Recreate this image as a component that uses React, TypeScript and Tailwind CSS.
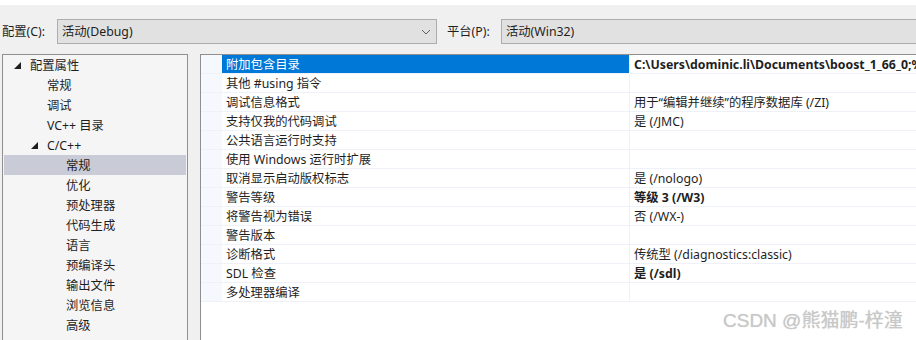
import { FC } from 'react';

const treeItems: { label: string; level: number; expanded?: boolean; selected?: boolean }[] = [
  { label: '配置属性', level: 0, expanded: true },
  { label: '常规', level: 1 },
  { label: '调试', level: 1 },
  { label: 'VC++ 目录', level: 1 },
  { label: 'C/C++', level: 1, expanded: true },
  { label: '常规', level: 2, selected: true },
  { label: '优化', level: 2 },
  { label: '预处理器', level: 2 },
  { label: '代码生成', level: 2 },
  { label: '语言', level: 2 },
  { label: '预编译头', level: 2 },
  { label: '输出文件', level: 2 },
  { label: '浏览信息', level: 2 },
  { label: '高级', level: 2 },
];

const props: { name: string; value: string; bold?: boolean }[] = [
  { name: '附加包含目录', value: 'C:\\Users\\dominic.li\\Documents\\boost_1_66_0;%(AdditionalIncludeDirectories)', bold: true },
  { name: '其他 #using 指令', value: '' },
  { name: '调试信息格式', value: '用于“编辑并继续”的程序数据库 (/ZI)' },
  { name: '支持仅我的代码调试', value: '是 (/JMC)' },
  { name: '公共语言运行时支持', value: '' },
  { name: '使用 Windows 运行时扩展', value: '' },
  { name: '取消显示启动版权标志', value: '是 (/nologo)' },
  { name: '警告等级', value: '等级 3 (/W3)', bold: true },
  { name: '将警告视为错误', value: '否 (/WX-)' },
  { name: '警告版本', value: '' },
  { name: '诊断格式', value: '传统型 (/diagnostics:classic)' },
  { name: 'SDL 检查', value: '是 (/sdl)', bold: true },
  { name: '多处理器编译', value: '' },
];

const Triangle: FC = () => (
  <svg width="7" height="7" viewBox="0 0 7 7" className="shrink-0">
    <polygon points="7,0 7,7 0,7" fill="#1e1e1e" />
  </svg>
);

const Chevron: FC = () => (
  <svg width="10" height="6" viewBox="0 0 10 6">
    <polyline points="1,1 5,5 9,1" fill="none" stroke="#606060" strokeWidth="1" />
  </svg>
);

const App: FC = () => {
  return (
    <div className="relative w-[916px] h-[340px] overflow-hidden bg-[#f0f0f0] text-[12.3px] leading-none text-[#1e1e1e] font-['Segoe_UI','Noto_Sans','Noto_Sans_CJK_SC',sans-serif]">
      <div className="h-[5px] bg-white" />

      <div className="flex items-center pt-[14px] pl-[2px]">
        <span className="w-[55px] shrink-0 pt-[2px]">配置(C):</span>
        <div className="flex items-center justify-between w-[380px] shrink-0 h-[25px] pl-[4px] pr-[5px] border border-[#adadad] bg-[#e1e1e1]">
          <span className="pt-[2px]">活动(Debug)</span>
          <Chevron />
        </div>
        <span className="ml-[10px] w-[54px] shrink-0 pt-[2px]">平台(P):</span>
        <div className="flex items-center flex-1 h-[25px] pl-[4px] border border-[#adadad] border-r-0 bg-[#e1e1e1]">
          <span className="pt-[2px]">活动(Win32)</span>
        </div>
      </div>

      <div className="flex mt-[10px] h-[300px]">
        <div className="ml-[2px] w-[186px] shrink-0 border border-[#8f8f8f] border-b-0 bg-[#f5f5f5] px-[1px]">
          {treeItems.map((item, i) => (
            <div
              key={i}
              className={`flex items-center h-[20px] whitespace-nowrap ${item.selected ? 'bg-[#c9cbd6]' : ''} ${
                item.level === 0 ? 'pl-[10px]' : item.level === 1 ? 'pl-[43px]' : 'pl-[62px]'
              }`}
            >
              {item.expanded ? (
                <span className={`flex items-center w-[16px] ${item.level === 0 ? '' : '-ml-[16px]'}`}>
                  <Triangle />
                </span>
              ) : null}
              <span className="pt-[2px]">{item.label}</span>
            </div>
          ))}
        </div>

        <div className="ml-[12px] flex-1 min-w-0 overflow-hidden border border-[#8f8f8f] border-r-0 border-b-0 bg-white">
          <div className="flex flex-col">
            {props.map((p, i) => (
              <div key={i} className="flex h-[19px] border-b border-[#eef2f8]">
                <div className="w-[21px] bg-[#f5f8fc] shrink-0" />
                <div
                  className={`flex items-center w-[408px] shrink-0 pl-[4px] pt-[2px] whitespace-nowrap border-r border-[#eef2f8] ${
                    i === 0 ? 'bg-[#0078d7] text-white' : ''
                  }`}
                >
                  {p.name}
                </div>
                <div className={`flex items-center pl-[4px] pt-[2px] whitespace-nowrap ${p.bold ? 'font-bold' : ''}`}>
                  {p.value}
                </div>
              </div>
            ))}
          </div>
        </div>
      </div>

      <div className="absolute left-[723px] top-[311px] text-[19px] text-[#c8c8c8] [text-shadow:0_0_1px_#d0d0d0] font-['Liberation_Sans','Noto_Sans_CJK_SC',sans-serif]">
        CSDN @熊猫鹏-梓潼
      </div>
    </div>
  );
};

export default App;
